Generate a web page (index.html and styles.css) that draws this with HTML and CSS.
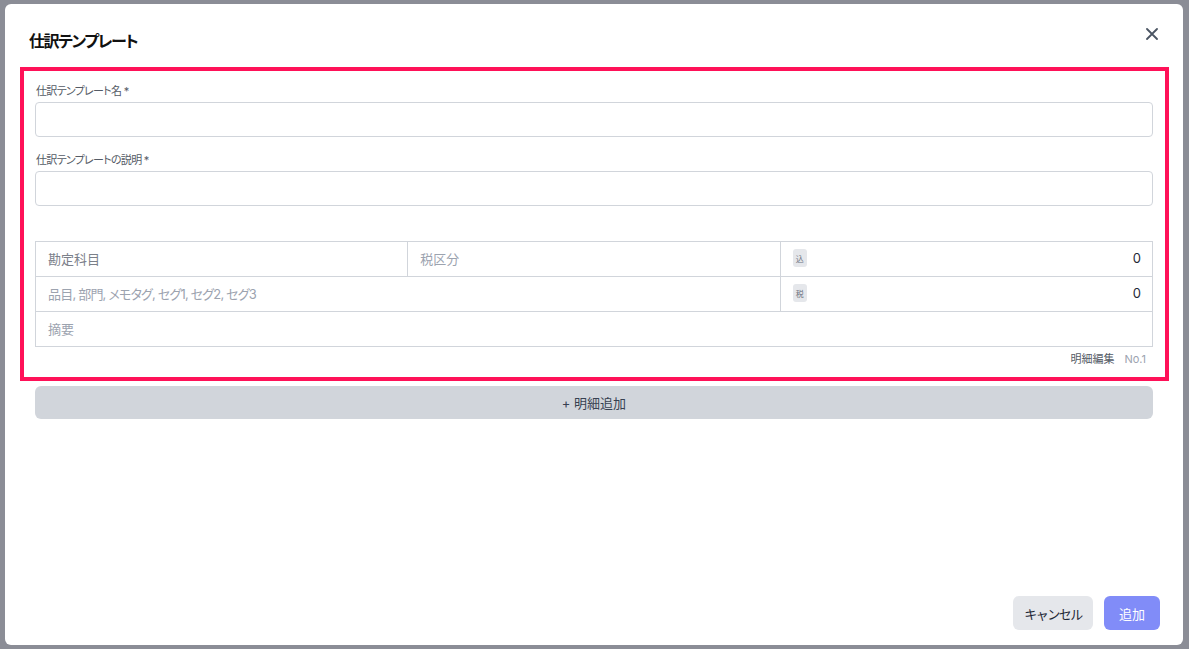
FILE: index.html
```html
<!DOCTYPE html>
<html lang="ja">
<head>
<meta charset="utf-8">
<title>仕訳テンプレート</title>
<link rel="stylesheet" href="styles.css">
</head>
<body>
<div class="modal">
  <div class="header">
    <h2 class="title">仕訳テンプレート</h2>
    <button class="close" aria-label="閉じる">
      <svg width="12" height="12" viewBox="0 0 12 12"><path d="M1 1L11 11M11 1L1 11" stroke="#4b5563" stroke-width="1.8" stroke-linecap="round"/></svg>
    </button>
  </div>
  <div class="section">
    <label class="label">仕訳テンプレート名 *</label>
    <div class="input"></div>
    <label class="label label-2">仕訳テンプレートの説明 *</label>
    <div class="input"></div>
    <div class="grid">
      <div class="cell cell-dark">勘定科目</div>
      <div class="cell">税区分</div>
      <div class="cell cell-amount"><span class="badge">込</span><span class="num">0</span></div>
      <div class="cell span-2 tight">品目, 部門, メモタグ, セグ1, セグ2, セグ3</div>
      <div class="cell cell-amount"><span class="badge">税</span><span class="num">0</span></div>
      <div class="cell span-3">摘要</div>
    </div>
    <div class="foot-note"><span class="edit">明細編集</span><span class="no">No.1</span></div>
  </div>
  <button class="add-line">+ 明細追加</button>
  <div class="spacer"></div>
  <div class="footer">
    <button class="btn btn-cancel">キャンセル</button>
    <button class="btn btn-primary">追加</button>
  </div>
</div>
</body>
</html>
```
FILE: styles.css
```css
* { box-sizing: border-box; }
html, body { margin: 0; padding: 0; }
body {
  width: 1189px;
  height: 649px;
  background: #8b8d96;
  font-family: Inter, "Noto Sans CJK JP", sans-serif;
  font-feature-settings: "palt";
  overflow: hidden;
  padding: 4px 0 0 5px;
}
.modal {
  width: 1178px;
  height: 641px;
  background: #fff;
  border-radius: 6px;
  display: flex;
  flex-direction: column;
}
.header {
  display: flex;
  justify-content: space-between;
  align-items: flex-start;
  padding: 25px 25px 0 24px;
}
.title {
  margin: 0;
  font-size: 16px;
  line-height: 24px;
  font-weight: 700;
  letter-spacing: -1.4px;
  color: #111;
}
.close {
  border: 0;
  background: none;
  padding: 0;
  margin-top: -1px;
  width: 12px;
  height: 12px;
  display: flex;
}
.section {
  margin: 14px 14px 0 15px;
  border: 4px solid #ff1158;
  padding: 12px 12px 10px 11px;
  display: flex;
  flex-direction: column;
}
.label {
  font-size: 11px;
  line-height: 16px;
  color: #555b66;
  letter-spacing: -0.7px;
  margin-bottom: 3px;
  padding-left: 1px;
}
.label-2 { margin-top: 15px; }
.input {
  height: 35px;
  border: 1px solid #d1d5db;
  border-radius: 4px;
  background: #fff;
}
.grid {
  margin-top: 35px;
  display: grid;
  grid-template-columns: 1fr 1fr 1fr;
  grid-auto-rows: 34px;
  gap: 1px;
  background: #d1d5db;
  border: 1px solid #d1d5db;
}
.cell {
  background: #fff;
  display: flex;
  align-items: center;
  padding: 0 12px 2px;
  font-size: 13px;
  color: #9ca3af;
}
.cell-dark { color: #7b808a; }
.tight { letter-spacing: -0.8px; }
.span-2 { grid-column: span 2; }
.span-3 { grid-column: span 3; }
.cell-amount { justify-content: space-between; padding: 0 11px 2px 12px; }
.badge {
  width: 14px;
  height: 18px;
  border-radius: 3px;
  background: #e5e7eb;
  color: #6b7280;
  font-size: 8px;
  display: flex;
  align-items: center;
  justify-content: center;
}
.num { color: #1f2937; font-size: 13px; }
.foot-note {
  margin-top: 4px;
  display: flex;
  justify-content: flex-end;
  gap: 10px;
  font-size: 11px;
  line-height: 16px;
  padding-right: 7px;
}
.edit { color: #555b66; }
.no { color: #9ca3af; }
.add-line {
  margin: 5px 30px 0 30px;
  height: 33px;
  border: 0;
  border-radius: 6px;
  background: #d1d5db;
  color: #374151;
  font-family: inherit;
  font-size: 13px;
}
.spacer { flex: 1; }
.footer {
  display: flex;
  justify-content: flex-end;
  gap: 11px;
  padding: 0 23px 15px 0;
}
.btn {
  height: 34px;
  border: 0;
  border-radius: 6px;
  font-family: inherit;
  font-size: 13px;
}
.btn-cancel { width: 80px; background: #e5e7eb; color: #1f2937; letter-spacing: -1.5px; }
.btn-primary { width: 56px; background: #818cf8; color: #fff; }
```
